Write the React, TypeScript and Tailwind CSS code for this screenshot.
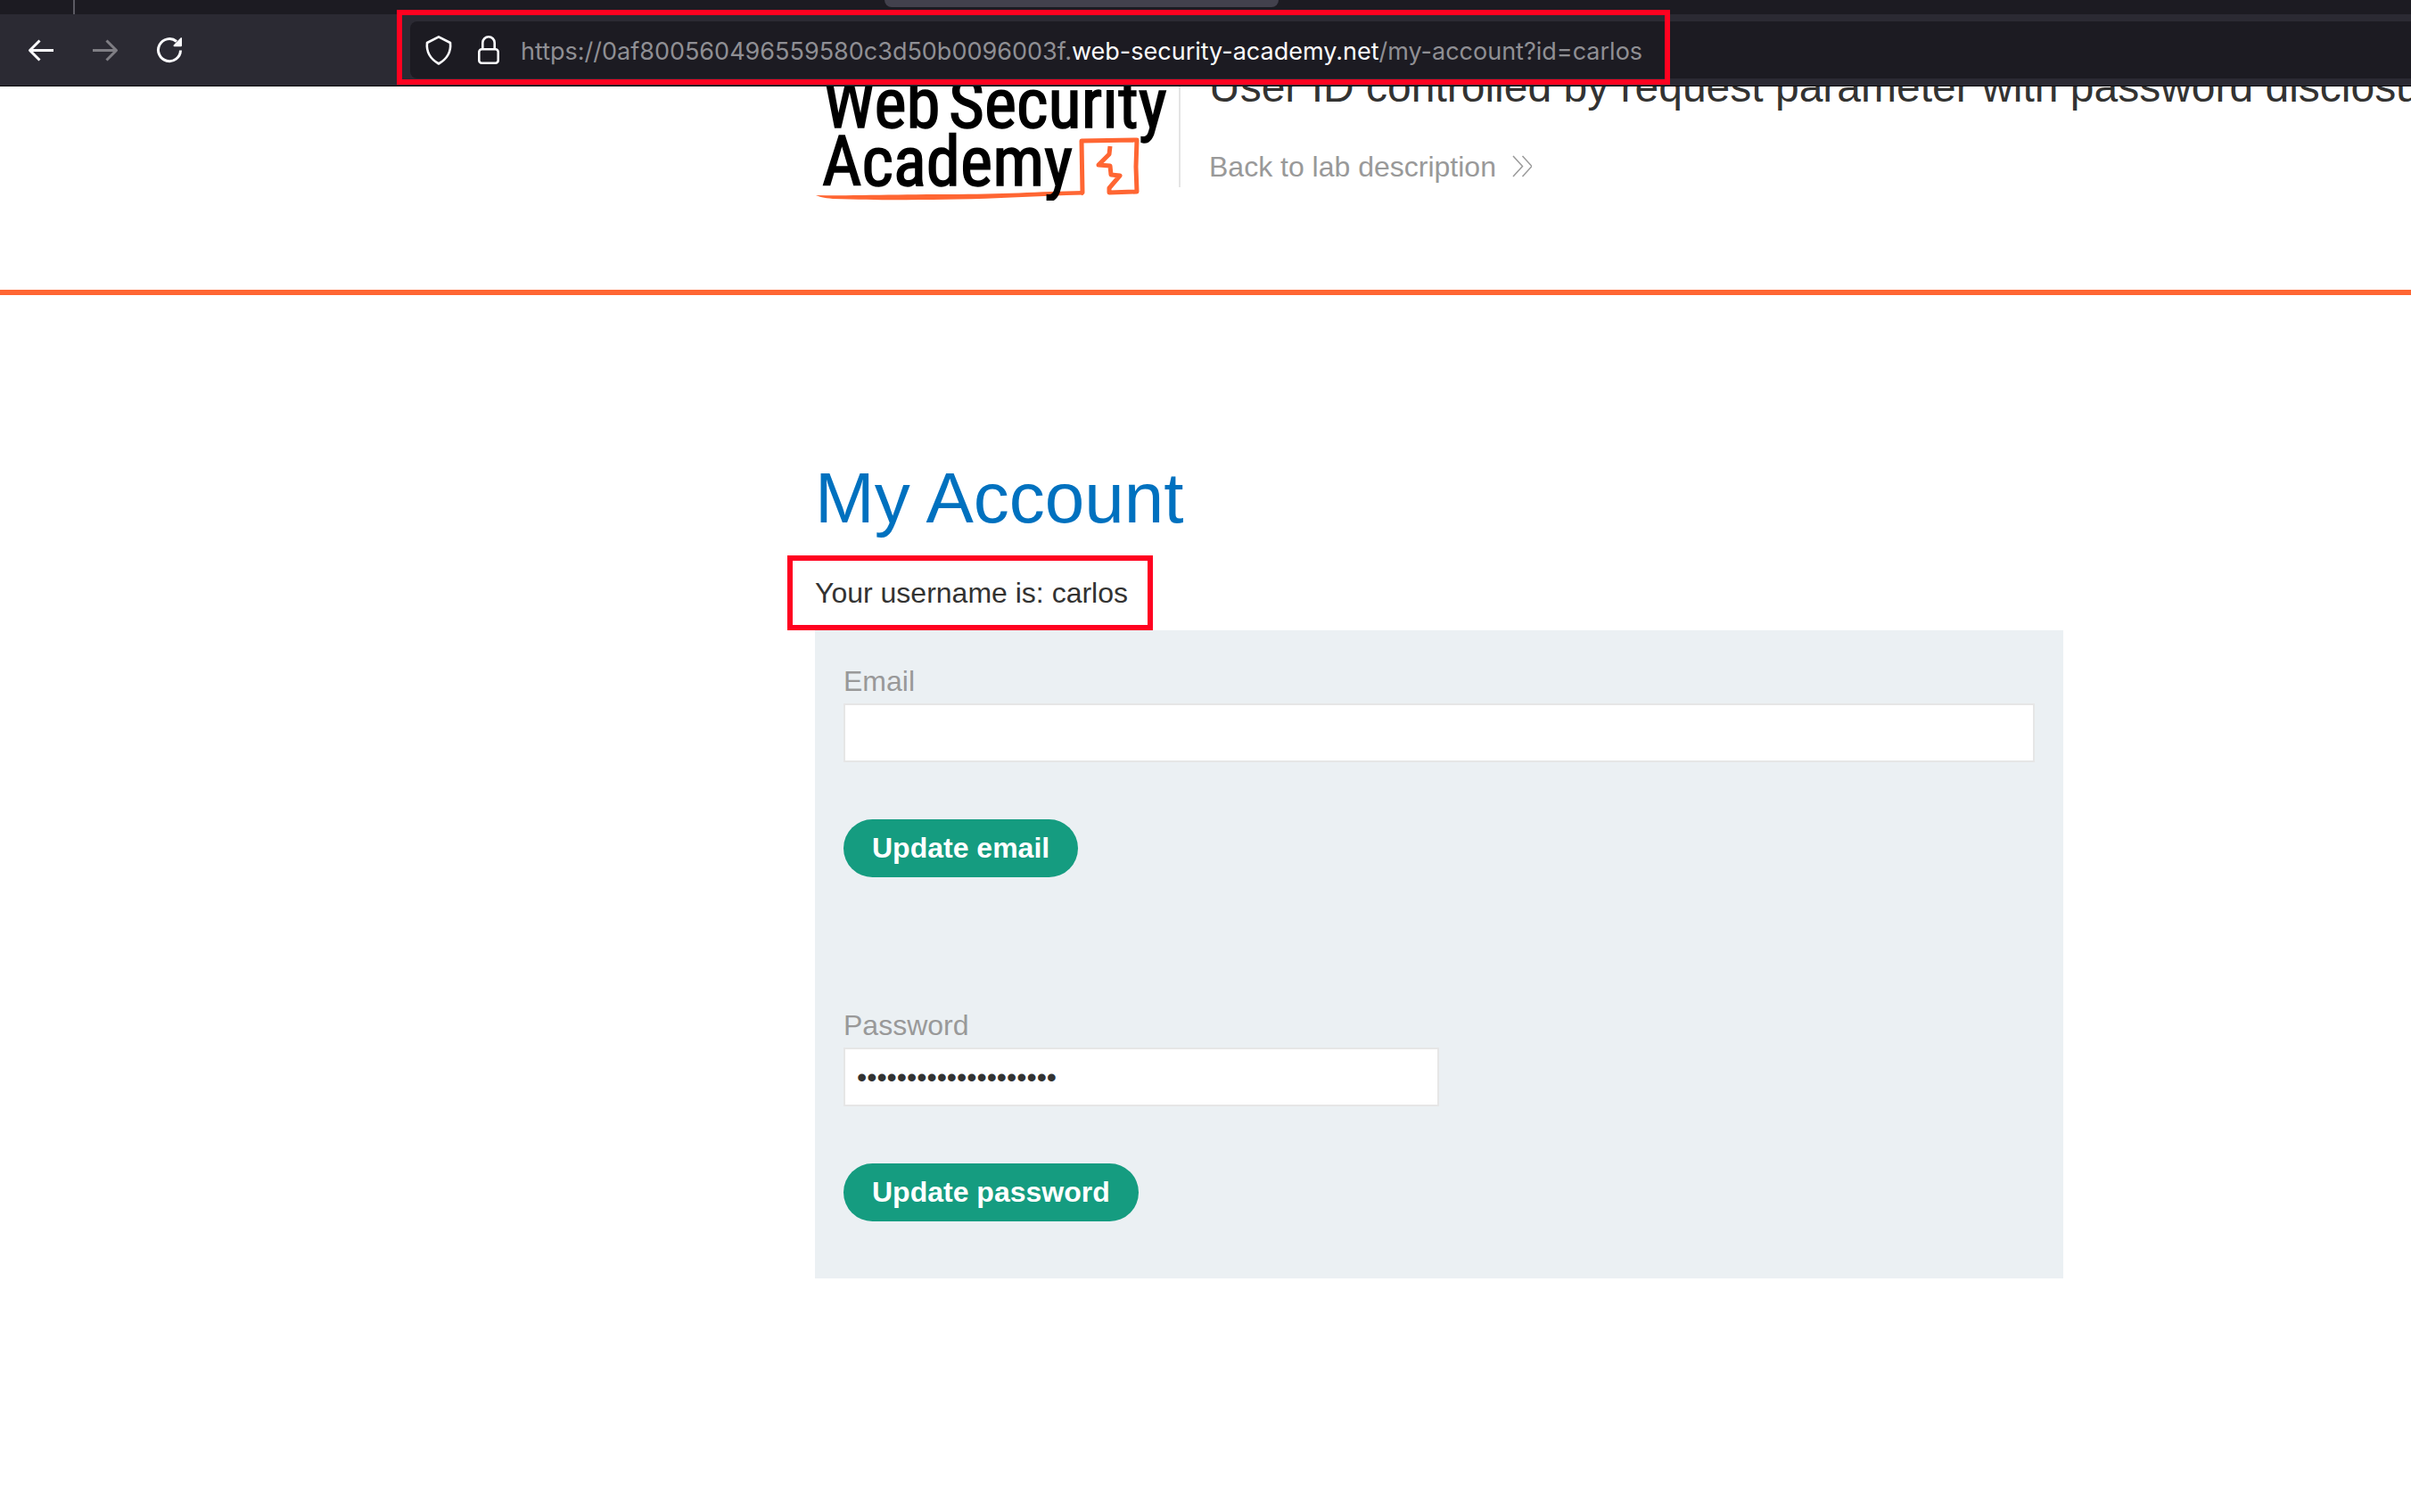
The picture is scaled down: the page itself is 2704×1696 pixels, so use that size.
import React from "react";

function BackIcon() {
  return (
    <svg viewBox="0 0 32 32" className="size-8" fill="none" stroke="currentColor" strokeWidth="3">
      <path d="M30 16.500H3.500M14.500 5.500 3.500 16.500 14.500 27.500" strokeLinejoin="round" />
    </svg>
  );
}

function ForwardIcon() {
  return (
    <svg viewBox="0 0 32 32" className="size-8" fill="none" stroke="currentColor" strokeWidth="3">
      <path d="M2 16.500h26.500M17.500 5.500 28.500 16.500 17.500 27.500" strokeLinejoin="round" />
    </svg>
  );
}

function ReloadIcon() {
  return (
    <svg viewBox="0 0 32 32" className="size-8" fill="none">
      <path d="M28.500 16.500A12.500 12.500 0 1 1 24 6.500" stroke="currentColor" strokeWidth="3" />
      <path d="M30 2.500v8.500a1.200 1.200 0 0 1-1.200 1.200H21.500c-1 0-1.300-1-.7-1.700L28.500 2.500C29 2 30 2 30 2.500z" fill="currentColor" />
    </svg>
  );
}

function ShieldIcon() {
  return (
    <svg viewBox="0 0 32 36" className="h-9 w-8" fill="none" stroke="currentColor" strokeWidth="2.6" strokeLinejoin="round">
      <path d="M16 3.300 29 10c1 9.500-3.500 18-13 23.500-9.500-5.500-14-14-13-23.500z" />
    </svg>
  );
}

function LockIcon() {
  return (
    <svg viewBox="0 0 32 36" className="h-9 w-8" fill="none" stroke="currentColor" strokeWidth="2.6">
      <rect x="5.300" y="17.300" width="21.400" height="15.400" rx="3" />
      <path d="M9.300 17V10a6.700 6.700 0 0 1 13.400 0v7" />
    </svg>
  );
}

function Highlight({ className }: { className: string }) {
  return <span aria-hidden="true" className={`pointer-events-none absolute z-10 border-6 border-[#ff0220] ${className}`} />;
}

function BrowserChrome() {
  return (
    <div className="font-[Inter,sans-serif]">
      <div className="grid h-4 grid-cols-[992fr_442px_1270fr] bg-[#1c1b22]">
        <div className="pl-[82px]">
          <div className="h-4 w-0.5 bg-[#5b5a63]" />
        </div>
        <div className="h-2 rounded-b-lg bg-[#42414d]" />
      </div>
      <nav className="flex h-[81px] items-center border-b border-[#0c0c0d] bg-[#2b2a33] text-[#fbfbfe]">
        <div className="flex w-[460px] shrink-0 gap-10 pl-[30px]">
          <button type="button" aria-label="Back"><BackIcon /></button>
          <button type="button" aria-label="Forward" className="text-[#7f7e84]"><ForwardIcon /></button>
          <button type="button" aria-label="Reload"><ReloadIcon /></button>
        </div>
        <div className="relative flex h-16 grow items-center rounded-l-lg bg-[#1c1b22] pl-4">
          <div className="flex gap-6">
            <ShieldIcon />
            <LockIcon />
          </div>
          <div className="pt-1 pl-5 text-[27px] leading-9 whitespace-nowrap text-[#8f8f94]">
            https://0af800560496559580c3d50b0096003f.<span className="text-[#fbfbfe]">web-security-academy.net</span>/my-account?id=carlos
          </div>
          <Highlight className="-top-[13px] -left-[15px] h-[84px] w-[1428px]" />
        </div>
      </nav>
    </div>
  );
}

function Logo() {
  return (
    <svg viewBox="0 0 408 128" className="h-32 w-[408px] shrink-0" role="img" aria-label="Web Security Academy">
      <path d="M1 122C40 123 90 121 150 121S250 118 301 117L301 121.500C250 122.500 200 126 160 126.500S80 128 20 126C10 125 4 123.500 1 122z" fill="#ff6633" />
      <path d="M298 120 300 119 299 61 361 60 360 90 361 118 330 119 330 114 342 100 332 99 331 89 318 88 330 76 331 67" fill="none" stroke="#ff6633" strokeWidth="5" strokeLinejoin="round" />
      <g fill="#000" stroke="#000" strokeWidth="1.500" fontFamily="'Roboto Condensed', 'Liberation Sans Narrow', sans-serif" fontSize="77">
        <text x="9" y="46">Web</text>
        <text x="150" y="46">Security</text>
        <text x="8" y="111">Academy</text>
      </g>
    </svg>
  );
}

function LabHeader() {
  return (
    <header className="grid h-[234px] grid-cols-[914fr_1400px_390fr] overflow-hidden border-b-6 border-[#ff6633]">
      <div className="col-start-2 flex items-start">
        <Logo />
        <div className="h-[113px] w-0.5 shrink-0 bg-[#e4e4e4]" />
        <div className="-mt-[27px] pl-8">
          <h2 className="text-5xl leading-[56px] whitespace-nowrap">
            User ID controlled by request parameter with password disclosure
          </h2>
          <a href="#lab" className="mt-[43px] flex items-center gap-4 text-[32px] leading-9 text-[#999]">
            Back to lab description
            <svg viewBox="0 0 24 26" className="h-[26px] w-6" fill="none" stroke="currentColor" strokeWidth="1.500">
              <path d="M3 1 13.500 12.500 3 24M13.500 1 24 12.500 13.500 24" />
            </svg>
          </a>
        </div>
      </div>
    </header>
  );
}

function Field({ id, label, type, value, className }: { id: string; label: string; type: string; value: string; className: string }) {
  return (
    <>
      <label htmlFor={id} className="block leading-[50px] text-[#999]">{label}</label>
      <input
        id={id}
        type={type}
        defaultValue={value}
        className={`block h-[66px] border-2 border-[#e6e6e6] bg-white px-[13px] outline-none ${className}`}
      />
    </>
  );
}

function SubmitButton({ children }: { children: React.ReactNode }) {
  return (
    <button type="submit" className="mt-16 block h-[65px] rounded-full bg-[#159c80] px-8 pb-0.5 font-bold whitespace-nowrap text-white">
      {children}
    </button>
  );
}

export default function App() {
  const stay = (e: React.FormEvent) => e.preventDefault();
  return (
    <div className="min-h-screen overflow-hidden bg-white font-['Liberation_Sans',Arial,sans-serif] text-[32px] text-[#333332]">
      <BrowserChrome />
      <LabHeader />
      <main className="grid grid-cols-[914fr_1400px_390fr] pt-[180px]">
        <div className="col-start-2">
          <h1 className="text-[80px] leading-24 text-[#0071bf]">My Account</h1>
          <p className="relative mt-10 pb-6 leading-9">
            Your username is: carlos
            <Highlight className="-left-[31px] bottom-0 h-[84px] w-[410px]" />
          </p>
          <div className="bg-[#ebf0f3] px-8 pt-8 pb-16">
            <form onSubmit={stay}>
              <Field id="email" label="Email" type="email" value="" className="w-full" />
              <SubmitButton>Update email</SubmitButton>
            </form>
            <form onSubmit={stay} className="mt-[141px]">
              <Field id="password" label="Password" type="password" value="abcdefghijklmnopqrst" className="w-1/2" />
              <SubmitButton>Update password</SubmitButton>
            </form>
          </div>
        </div>
      </main>
    </div>
  );
}
